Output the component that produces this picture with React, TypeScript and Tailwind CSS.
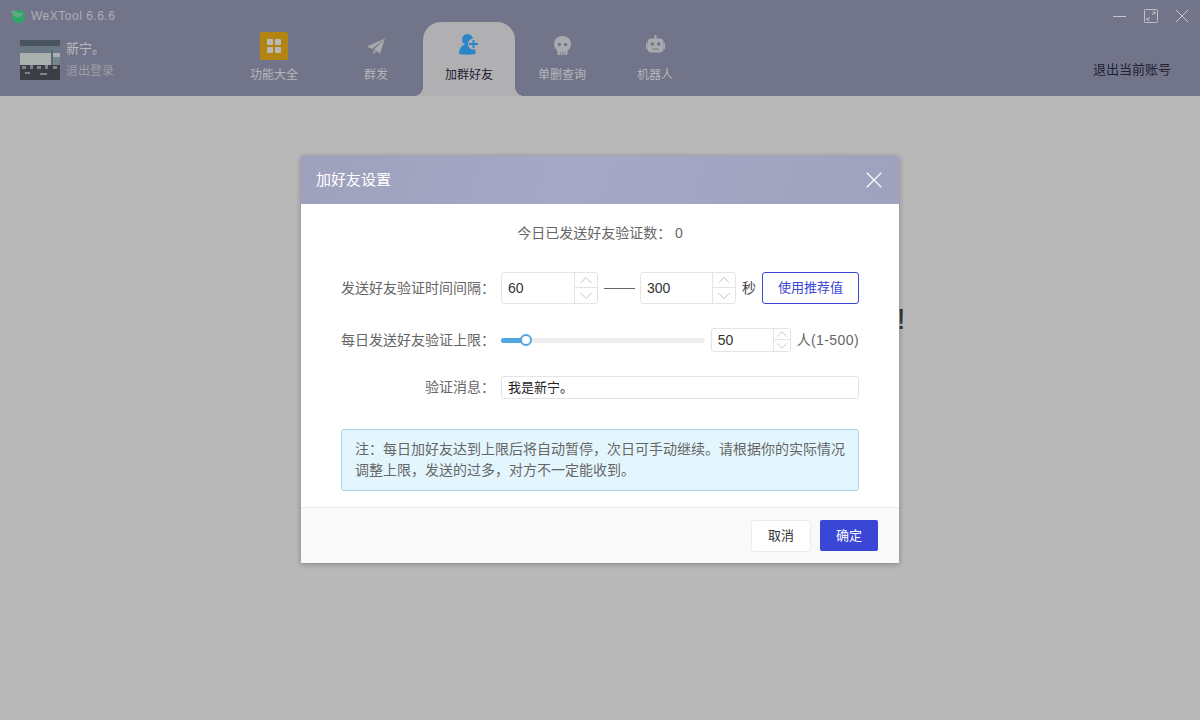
import { ChevronDown, ChevronUp, X } from "lucide-react";

const font = { fontFamily: '"Liberation Sans", "Noto Sans CJK SC", sans-serif' };

function Stepper({ value, className, small }: { value: string; className: string; small?: boolean }) {
  return (
    <div className={`flex rounded-[3px] border border-[#e4e4e4] bg-white text-[14px] text-[#333] ${className}`}>
      <div className="flex flex-1 items-center pl-[6px]">{value}</div>
      <div className={`flex flex-col border-l border-[#e4e4e4] text-[#b5b5b5] ${small ? "w-[17px]" : "w-[23px]"}`}>
        <div className="flex h-1/2 items-center justify-center overflow-hidden border-b border-[#e4e4e4]">
          <ChevronUp className="shrink-0" size={small ? 18 : 20} strokeWidth={1} />
        </div>
        <div className="flex h-1/2 items-center justify-center overflow-hidden">
          <ChevronDown className="shrink-0" size={small ? 18 : 20} strokeWidth={1} />
        </div>
      </div>
    </div>
  );
}

function NavItem({ label, icon, active, className }: { label: string; icon: React.ReactNode; active?: boolean; className?: string }) {
  return (
    <div
      className={`relative flex w-[92px] flex-col items-center ${
        active ? "rounded-t-[18px] bg-[#b0b0b2] text-[#1d2030]" : "text-[#b6b6b9]"
      } ${className ?? ""}`}
    >
      {active && (
        <>
          <div className="absolute bottom-0 left-[-10px] h-[10px] w-[10px] bg-[radial-gradient(circle_at_0_0,transparent_10px,#b0b0b2_10.5px)]" />
          <div className="absolute bottom-0 right-[-10px] h-[10px] w-[10px] bg-[radial-gradient(circle_at_100%_0,transparent_10px,#b0b0b2_10.5px)]" />
        </>
      )}
      <div className="flex h-[40px] items-end justify-center">{icon}</div>
      <div className="mt-[4px] text-[12px] leading-[18px]">{label}</div>
    </div>
  );
}

export default function App() {
  return (
    <div className="relative h-[720px] w-[1200px] overflow-hidden bg-[#b9b9b9]" style={font}>
      <div className="h-[96px] bg-[#72758a]">
        <div className="flex h-[32px] items-center justify-between pl-[10px] pr-[6px]">
          <div className="flex items-center gap-[5px] text-[12px] text-[#aeaeb4]">
            <svg width="16" height="16" viewBox="0 0 16 16">
              <circle cx="8.5" cy="8.5" r="6.5" fill="#2aa769" />
              <path d="M0.5 2.5 C4 2 7 3 9 5.5 C10.5 4.8 12 4.6 13.5 5 C12 7 10.5 9.5 8 9.5 C5 9.5 2 6 0.5 2.5Z" fill="#63a884" />
            </svg>
            <span className="tracking-[0.5px]">WeXTool 6.6.6</span>
          </div>
          <div className="flex items-center text-[#c6c6cb]">
            <div className="mr-[18px] h-px w-[13px] bg-[#c6c6cb]" />
            <svg className="mr-[12px]" width="14" height="14" viewBox="0 0 14 14" fill="none" stroke="currentColor" strokeWidth="0.9">
              <rect x="0.5" y="0.5" width="13" height="13" rx="1" />
              <path d="M8 6 L11 3 M8.5 3 H11 V5.5 M6 8 L3 11 M3 8.5 V11 H5.5" />
            </svg>
            <X size={24} strokeWidth={1} />
          </div>
        </div>
        <div className="flex h-[64px] items-start">
          <div className="flex w-[228px] gap-[6px] pl-[20px] pt-[8px]">
            <svg width="40" height="40" viewBox="0 0 40 40">
              <rect width="40" height="40" fill="#5b6068" />
              <rect width="40" height="6" fill="#4a5360" />
              <rect y="6" width="40" height="7" fill="#697684" />
              <rect y="13" width="40" height="14" fill="#aab0ad" />
              <rect x="31" y="10" width="2" height="20" fill="#556a72" />
              <rect x="33" y="17" width="7" height="9" fill="#74888a" />
              <rect y="25" width="40" height="15" fill="#3c3e46" />
              <path d="M2 26 h4 v3 h-4z M10 25 h3 v4 h-3z M17 26 h4 v3 h-4z M25 25 h3 v4 h-3z M33 26 h4 v3 h-4z M5 32 h5 v2 h-5z M20 33 h7 v2 h-7z" fill="#80848a" />
            </svg>
            <div className="-mt-[1px] text-[13px]">
              <div className="leading-[20px] text-[#b9b9bc]">新宁。</div>
              <div className="mt-[1px] text-[12px] leading-[22px] text-[#9d9da3]">退出登录</div>
            </div>
          </div>
          <div className="mt-[-10px] flex h-[74px] gap-[1px]">
            <NavItem
              label="功能大全"
              className="mr-[9px]"
              icon={
                <div className="mb-[2px] grid h-[28px] w-[28px] grid-cols-2 place-content-center gap-[2px] rounded-[2px] bg-[#b28512] px-[7px]">
                  <div className="h-[6px] w-[6px] rounded-[1px] bg-[#b9b9b9]" />
                  <div className="h-[6px] w-[6px] rounded-[1px] bg-[#b9b9b9]" />
                  <div className="h-[6px] w-[6px] rounded-[1px] bg-[#b9b9b9]" />
                  <div className="h-[6px] w-[6px] rounded-[1px] bg-[#b9b9b9]" />
                </div>
              }
            />
            <NavItem
              label="群发"
              icon={
                <svg width="18" height="17" viewBox="0 0 18 16" fill="#a9a9ae" className="mb-[7px]">
                  <path d="M18 0 L0 8 L5 10.5 Z" />
                  <path d="M18 0 L7 11 L13 15 Z" />
                  <path d="M6.5 11.5 L6.5 16 L9 13 Z" />
                </svg>
              }
            />
            <NavItem
              label="加群好友"
              active
              icon={
                <svg width="20" height="23" viewBox="0 0 20 22" className="mb-[6px]">
                  <circle cx="8.5" cy="6" r="5.5" fill="#2a86c9" />
                  <path d="M0 20.5 C0 15 2 12.5 6 11 L12 11 C15 12 16.5 15 16.5 20.5 C11 21.5 5 21.5 0 20.5 Z" fill="#2a86c9" />
                  <circle cx="14.5" cy="10.5" r="5.5" fill="#b0b0b2" />
                  <path d="M13.5 6.5 H15.5 V9.5 H19 V11.5 H15.5 V14.5 H13.5 V11.5 H10 V9.5 H13.5 Z" fill="#2a86c9" />
                </svg>
              }
            />
            <NavItem
              label="单删查询"
              icon={
                <svg width="17" height="19" viewBox="0 0 16 18" fill="#a9a9ae" className="mb-[7px]">
                  <path d="M8 0 C3.5 0 0 3 0 7.5 C0 10.5 1.5 12.5 3 13.5 L3.5 18 L12.5 18 L13 13.5 C14.5 12.5 16 10.5 16 7.5 C16 3 12.5 0 8 0 Z" />
                  <circle cx="5" cy="8" r="1.6" fill="#72758a" />
                  <circle cx="11" cy="8" r="1.6" fill="#72758a" />
                  <path d="M6 15 V18 M8 15 V18 M10 15 V18" stroke="#72758a" strokeWidth="0.6" />
                </svg>
              }
            />
            <NavItem
              label="机器人"
              icon={
                <svg width="19" height="19" viewBox="0 0 19 19" fill="#a9a9ae" className="mb-[8px]">
                  <rect x="8.5" y="0" width="2" height="4" />
                  <rect x="1.5" y="3.5" width="16" height="14" rx="4" />
                  <rect x="0" y="8" width="1.5" height="6" />
                  <rect x="17.5" y="8" width="1.5" height="6" />
                  <circle cx="6.3" cy="9" r="1.8" fill="#72758a" />
                  <circle cx="12.7" cy="9" r="1.8" fill="#72758a" />
                  <rect x="6.5" y="13.5" width="6" height="1" fill="#72758a" />
                </svg>
              }
            />
          </div>
          <div className="ml-auto pr-[29px] pt-[29px] text-[13px] leading-[18px] text-[#1f2233]">退出当前账号</div>
        </div>
      </div>

      <div className="absolute left-[897px] top-[302px] text-[30px] leading-[34px] text-[#333]">!</div>

      <div className="absolute left-[301px] top-[156px] h-[407px] w-[598px] shadow-[0_1px_6px_rgba(0,0,0,0.3)]">
        <div className="flex h-[48px] items-center justify-between bg-[linear-gradient(110deg,#9ea1bc,#a6a9c6_45%,#9fa2bd)] pl-[15px] pr-[11px] text-white">
          <span className="pt-[1px] text-[15px]">加好友设置</span>
          <X size={28} strokeWidth={1} />
        </div>
        <div className="h-[303px] bg-white px-[40px] text-[14px] text-[#666]">
          <div className="pt-[20px] text-center leading-[18px]">今日已发送好友验证数：&nbsp;0</div>
          <div className="mt-[30px] flex h-[32px] items-center">
            <div className="w-[154px] whitespace-nowrap text-right">发送好友验证时间间隔：</div>
            <Stepper value="60" className="ml-[6px] h-[32px] w-[97px]" />
            <div className="ml-[6px] mr-[5px] h-px w-[31px] bg-[#666]" />
            <Stepper value="300" className="h-[32px] w-[96px]" />
            <span className="ml-[6px] text-[#444]">秒</span>
            <div className="ml-[6px] flex h-[32px] w-[97px] items-center justify-center rounded-[3px] border border-[#3a46d6] text-[13px] text-[#3a46d6]">
              使用推荐值
            </div>
          </div>
          <div className="mt-[24px] flex h-[24px] items-center">
            <div className="w-[154px] whitespace-nowrap text-right">每日发送好友验证上限：</div>
            <div className="relative ml-[6px] h-[5px] w-[204px] rounded-full bg-[#eeeeee]">
              <div className="h-[5px] w-[25px] rounded-full bg-[#4fa6e3]" />
              <div className="absolute left-[19px] top-[-4px] h-[12px] w-[12px] rounded-full border-2 border-[#4fa6e3] bg-white" />
            </div>
            <Stepper value="50" small className="ml-[6px] h-[24px] w-[80px]" />
            <span className="ml-[6px] whitespace-nowrap tracking-[0.4px]">人(1-500)</span>
          </div>
          <div className="mt-[24px] flex h-[23px] items-center">
            <div className="w-[154px] whitespace-nowrap text-right">验证消息：</div>
            <div className="ml-[6px] flex h-[23px] w-[358px] items-center rounded-[2px] border border-[#e4e4e4] pl-[6px] text-[13px] text-[#222]">
              我是新宁。
            </div>
          </div>
          <div className="mt-[30px] h-[62px] w-[518px] rounded-[3px] border border-[#a9d0e6] bg-[#e3f6fe] px-[13px] py-[9px] leading-[21px] text-[#666]">
            注：每日加好友达到上限后将自动暂停，次日可手动继续。请根据你的实际情况调整上限，发送的过多，对方不一定能收到。
          </div>
        </div>
        <div className="flex h-[56px] items-center justify-end gap-[9px] border-t border-[#e8e8e8] bg-[#f9f9f9] pr-[21px] text-[13px]">
          <div className="flex h-[32px] w-[60px] items-center justify-center rounded-[3px] border border-[#ececec] bg-white text-[#333]">
            取消
          </div>
          <div className="flex h-[31px] w-[58px] items-center justify-center rounded-[2px] bg-[#3a46d6] text-white">确定</div>
        </div>
      </div>
    </div>
  );
}
